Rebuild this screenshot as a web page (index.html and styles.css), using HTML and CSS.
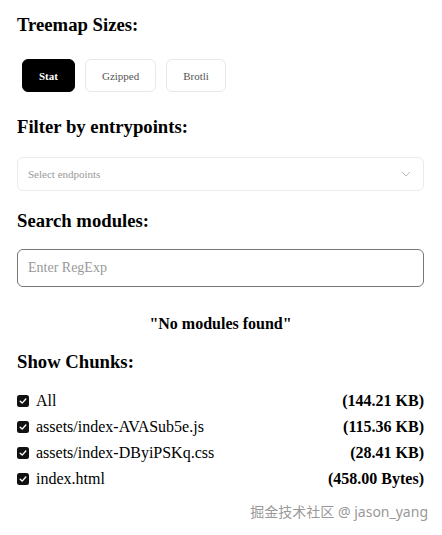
FILE: index.html
```html
<!DOCTYPE html>
<html>
<head>
<meta charset="utf-8">
<link rel="stylesheet" href="styles.css">
</head>
<body>
<div class="page">
  <h3 class="title t1">Treemap Sizes:</h3>
  <div class="sizes">
    <button class="btn active">Stat</button>
    <button class="btn">Gzipped</button>
    <button class="btn">Brotli</button>
  </div>
  <h3 class="title t2">Filter by entrypoints:</h3>
  <div class="select">
    <span class="ph">Select endpoints</span>
    <svg class="chev" width="10" height="6" viewBox="0 0 10 6"><path d="M1 1 L5 5 L9 1" fill="none" stroke="#bbb" stroke-width="1"/></svg>
  </div>
  <h3 class="title t3">Search modules:</h3>
  <div class="search"><span class="ph2">Enter RegExp</span></div>
  <div class="empty">"No modules found"</div>
  <h3 class="title t4">Show Chunks:</h3>
  <ul class="chunks">
    <li class="row"><span class="cb"><svg width="12" height="12" viewBox="0 0 12 12"><rect x="0" y="0" width="12" height="12" rx="2.5" fill="#111"/><path d="M3.2 6.2 L5.2 8.1 L8.8 4" fill="none" stroke="#fff" stroke-width="1.4" stroke-linecap="round" stroke-linejoin="round"/></svg></span><span class="name">All</span><span class="size">(144.21 KB)</span></li>
    <li class="row"><span class="cb"><svg width="12" height="12" viewBox="0 0 12 12"><rect x="0" y="0" width="12" height="12" rx="2.5" fill="#111"/><path d="M3.2 6.2 L5.2 8.1 L8.8 4" fill="none" stroke="#fff" stroke-width="1.4" stroke-linecap="round" stroke-linejoin="round"/></svg></span><span class="name">assets/index-AVASub5e.js</span><span class="size">(115.36 KB)</span></li>
    <li class="row"><span class="cb"><svg width="12" height="12" viewBox="0 0 12 12"><rect x="0" y="0" width="12" height="12" rx="2.5" fill="#111"/><path d="M3.2 6.2 L5.2 8.1 L8.8 4" fill="none" stroke="#fff" stroke-width="1.4" stroke-linecap="round" stroke-linejoin="round"/></svg></span><span class="name">assets/index-DByiPSKq.css</span><span class="size">(28.41 KB)</span></li>
    <li class="row"><span class="cb"><svg width="12" height="12" viewBox="0 0 12 12"><rect x="0" y="0" width="12" height="12" rx="2.5" fill="#111"/><path d="M3.2 6.2 L5.2 8.1 L8.8 4" fill="none" stroke="#fff" stroke-width="1.4" stroke-linecap="round" stroke-linejoin="round"/></svg></span><span class="name">index.html</span><span class="size">(458.00 Bytes)</span></li>
  </ul>
  <div class="wm">掘金技术社区 @ jason_yang</div>
</div>
</body>
</html>
```
FILE: styles.css
```css
html, body {
  margin: 0;
  padding: 0;
  background: #fff;
}
body {
  font-family: "Liberation Serif", "Times New Roman", serif;
  color: #000;
}
.page {
  padding: 14px 18px 0 17px;
  display: flex;
  flex-direction: column;
}
.title {
  margin: 0;
  font-size: 18.7px;
  font-weight: bold;
  line-height: 22px;
}
.sizes {
  display: flex;
  gap: 10px;
  margin: 23px 0 0 5px;
}
.btn {
  font-family: "Liberation Serif", serif;
  font-size: 11px;
  height: 33px;
  padding: 0 16px;
  border: 1px solid #e8e8e8;
  border-radius: 6px;
  background: #fff;
  color: #555;
}
.btn.active {
  background: #000;
  border-color: #000;
  color: #fff;
  font-weight: bold;
}
.t2 { margin-top: 24px; }
.select {
  margin-top: 19px;
  height: 34px;
  border: 1px solid #ebebeb;
  border-radius: 6px;
  box-sizing: border-box;
  display: flex;
  align-items: center;
  justify-content: space-between;
  padding: 0 12px 0 10px;
}
.ph {
  font-size: 11px;
  color: #999;
}
.t3 { margin-top: 19px; }
.search {
  margin-top: 17px;
  height: 38px;
  border: 1px solid #777;
  border-radius: 6px;
  box-sizing: border-box;
  display: flex;
  align-items: center;
  padding: 0 10px;
}
.ph2 {
  font-size: 14px;
  color: #999;
}
.empty {
  margin-top: 27px;
  text-align: center;
  font-weight: bold;
  font-size: 16px;
  line-height: 20px;
}
.t4 { margin-top: 17px; }
.chunks {
  list-style: none;
  margin: 15px 0 0 0;
  padding: 0;
}
.row {
  display: flex;
  align-items: center;
  height: 26px;
  font-size: 16px;
}
.cb {
  display: flex;
  width: 19px;
}
.name { flex: 1; }
.size { font-weight: bold; }
.wm {
  margin-top: 9px;
  text-align: right;
  margin-right: -4px;
  font-family: "Noto Sans", "Noto Sans CJK SC", sans-serif;
  font-size: 14px;
  color: #999;
}
```
